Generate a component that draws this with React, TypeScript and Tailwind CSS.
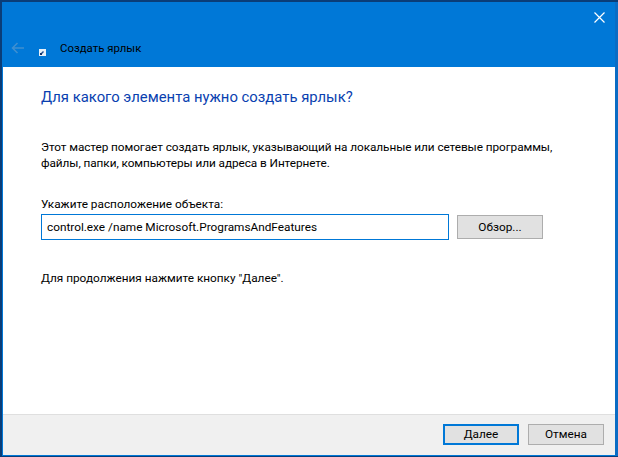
export default function App() {
  const font = { fontFamily: 'Roboto, "Open Sans", sans-serif' };
  return (
    <div style={font} className="w-[618px] h-[457px] bg-[#0a3d78] pt-[2px] pl-[2px] pb-[1px] overflow-hidden">
      <div className="flex flex-col h-full border-l border-b border-r-[3px] border-l-[#0078d7] border-b-[#0078d7] border-r-[#0a6cc4] bg-white">
        <div className="relative h-[65px] bg-[#0078d7] flex items-end pb-[11px] shrink-0">
          <svg width="13" height="12" viewBox="0 0 13 12" className="ml-[8px] mb-[2px]" fill="none" stroke="#3f8fd0" strokeWidth="1.5">
            <path d="M13 6H1.5M6.5 1 1.5 6l5 5" />
          </svg>
          <svg width="7" height="7" viewBox="0 0 7 7" className="ml-[15px]">
            <rect width="7" height="7" fill="#e8f0f8" />
            <path d="M2 5 4.5 2.5" stroke="#1f4f90" strokeWidth="1.4" />
            <rect x="1" y="4" width="2" height="2" fill="#16346a" />
          </svg>
          <span className="ml-[14px] text-[11.4px] leading-[16px] text-black">Создать ярлык</span>
          <svg width="11" height="11" viewBox="0 0 11 11" className="absolute right-[10px] top-[10px]" stroke="#fff" strokeWidth="1.2">
            <path d="M.5.5l10 10M10.5.5l-10 10" />
          </svg>
        </div>
        <div className="flex-1 px-[38px] pt-[19px] text-[11.8px] leading-[16px] text-black">
          <h1 className="text-[14.85px] leading-[22px] font-normal text-[#0a3fb0]">Для какого элемента нужно создать ярлык?</h1>
          <p className="mt-[31px] w-[530px] tracking-[-0.07px]">Этот мастер помогает создать ярлык, указывающий на локальные или сетевые программы, файлы, папки, компьютеры или адреса в Интернете.</p>
          <p className="mt-[25px]">Укажите расположение объекта:</p>
          <div className="mt-[2px] flex items-center gap-[8px]">
            <div className="w-[408px] h-[26px] border border-[#0078d7] px-[5px] flex items-center">control.exe /name Microsoft.ProgramsAndFeatures</div>
            <button className="w-[86px] h-[24px] bg-[#e1e1e1] border border-[#adadad] flex items-center justify-center">Обзор...</button>
          </div>
          <p className="mt-[30px]">Для продолжения нажмите кнопку "Далее".</p>
        </div>
        <div className="h-[41px] shrink-0 bg-[#f0f0f0] border-t border-[#dfdfdf] flex items-start justify-end gap-[9px] pt-[9px] pr-[11px] text-[11.8px] text-black">
          <button className="w-[76px] h-[21px] bg-[#e1e1e1] border-2 border-[#0078d7] flex items-center justify-center">Далее</button>
          <button className="w-[76px] h-[21px] bg-[#e1e1e1] border border-[#adadad] flex items-center justify-center">Отмена</button>
        </div>
      </div>
    </div>
  );
}
